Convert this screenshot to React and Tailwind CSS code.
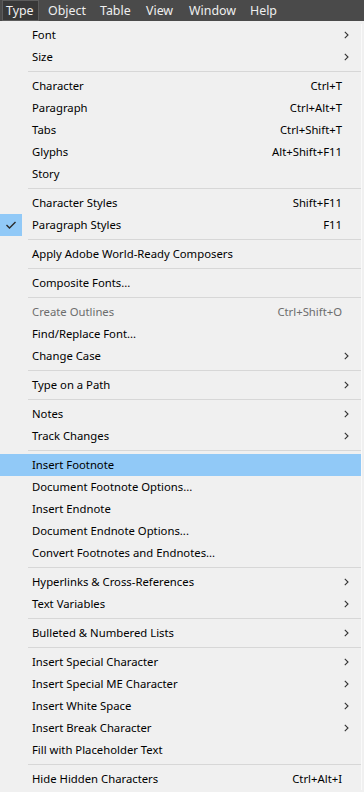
import React from 'react';

const menus = [
  { label: 'Type', w: 'w-[37px]', pl: 'pl-[3px]', active: true },
  { label: 'Object', w: 'w-[52px]', pl: 'pl-[9px]' },
  { label: 'Table', w: 'w-[46px]', pl: 'pl-[9px]' },
  { label: 'View', w: 'w-[43px]', pl: 'pl-[9px]' },
  { label: 'Window', w: 'w-[61px]', pl: 'pl-[9px]' },
  { label: 'Help', w: 'w-[50px]', pl: 'pl-[9px]' },
];

// '-' marks a separator
const items = [
  { label: 'Font', sub: true },
  { label: 'Size', sub: true },
  '-',
  { label: 'Character', key: 'Ctrl+T' },
  { label: 'Paragraph', key: 'Ctrl+Alt+T' },
  { label: 'Tabs', key: 'Ctrl+Shift+T' },
  { label: 'Glyphs', key: 'Alt+Shift+F11' },
  { label: 'Story' },
  '-',
  { label: 'Character Styles', key: 'Shift+F11' },
  { label: 'Paragraph Styles', key: 'F11', checked: true },
  '-',
  { label: 'Apply Adobe World-Ready Composers' },
  '-',
  { label: 'Composite Fonts...' },
  '-',
  { label: 'Create Outlines', key: 'Ctrl+Shift+O', disabled: true },
  { label: 'Find/Replace Font...' },
  { label: 'Change Case', sub: true },
  '-',
  { label: 'Type on a Path', sub: true },
  '-',
  { label: 'Notes', sub: true },
  { label: 'Track Changes', sub: true },
  '-',
  { label: 'Insert Footnote', hover: true },
  { label: 'Document Footnote Options...' },
  { label: 'Insert Endnote' },
  { label: 'Document Endnote Options...' },
  { label: 'Convert Footnotes and Endnotes...' },
  '-',
  { label: 'Hyperlinks & Cross-References', sub: true },
  { label: 'Text Variables', sub: true },
  '-',
  { label: 'Bulleted & Numbered Lists', sub: true },
  '-',
  { label: 'Insert Special Character', sub: true },
  { label: 'Insert Special ME Character', sub: true },
  { label: 'Insert White Space', sub: true },
  { label: 'Insert Break Character', sub: true },
  { label: 'Fill with Placeholder Text' },
  '-',
  { label: 'Hide Hidden Characters', key: 'Ctrl+Alt+I' },
];

const Chevron = () => (
  <svg width="5" height="8" viewBox="0 0 5 8" className="block">
    <path d="M0.8 0.8 L4 4 L0.8 7.2" fill="none" stroke="#333" strokeWidth="1.1" />
  </svg>
);

const Check = () => (
  <svg width="12" height="10" viewBox="0 0 12 10" className="block">
    <path d="M1.5 5 L4.5 8 L10.5 2" fill="none" stroke="#2b2b2b" strokeWidth="1.4" />
  </svg>
);

const MenuRow = ({ item }) => (
  <div className={`relative flex h-[22px] items-center ${item.hover ? 'bg-[#91c9f7]' : ''}`}>
    <div className={`flex h-[22px] w-[22px] items-center justify-center ${item.checked ? 'bg-[#91c9f7]' : ''}`}>
      {item.checked && <Check />}
    </div>
    <span className={`ml-[10px] flex-1 ${item.disabled ? 'text-[#6d6d6d]' : 'text-[#000]'}`}>{item.label}</span>
    {item.key && (
      <span className={`mr-[19px] ${item.disabled ? 'text-[#6d6d6d]' : 'text-[#000]'}`}>{item.key}</span>
    )}
    {item.sub && (
      <span className="mr-[12px]">
        <Chevron />
      </span>
    )}
  </div>
);

const App = () => {
  return (
    <div
      className="h-[792px] w-[364px] overflow-hidden bg-[#f0f0f0] text-[11.3px] leading-none"
      style={{ fontFamily: '"Noto Sans", "Open Sans", sans-serif' }}
    >
      {/* menu bar */}
      <div className="flex h-[21px] items-center bg-[#4a4a4a] pl-[2px] text-[12.4px] text-[#efefef]">
        {menus.map((m) => (
          <div
            key={m.label}
            className={`flex h-[21px] items-center pt-[2px] ${m.w} ${m.pl} ${m.active ? 'border border-[#5c5c5c] bg-[#383838]' : ''}`}
          >
            {m.label}
          </div>
        ))}
      </div>

      {/* dropdown */}
      <div className="mt-[3px] w-[362px] border-r border-[#fafafa] bg-[#f0f0f0]">
        {items.map((item, i) =>
          item === '-' ? (
            <div key={i} className="flex h-[7px] items-center pl-[28px]">
              <div className="h-px w-full bg-[#d7d7d7]" />
            </div>
          ) : (
            <MenuRow key={i} item={item} />
          )
        )}
      </div>
    </div>
  );
};

export default App;
